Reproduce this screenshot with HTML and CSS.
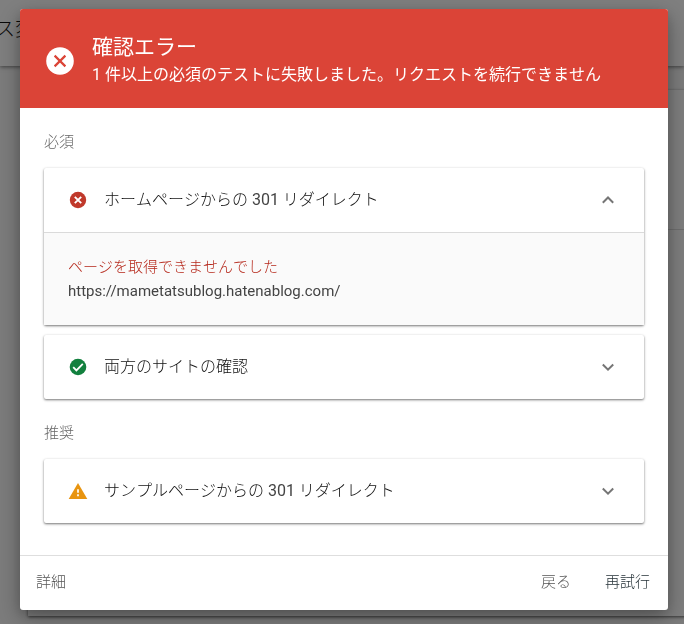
FILE: index.html
```html
<!DOCTYPE html>
<html lang="ja">
<head>
<meta charset="utf-8">
<meta name="viewport" content="width=device-width, initial-scale=1">
<title>確認エラー</title>
<link rel="stylesheet" href="styles.css">
</head>
<body>
<div class="page">
  <header class="appbar">ス変</header>
  <div class="sheet"><div class="sheet-top"></div></div>
</div>
<div class="scrim">
  <section class="dialog" role="dialog" aria-modal="true" aria-labelledby="dialog-title">
    <header class="dialog-header">
      <svg class="icon-lg" viewBox="0 0 28 28" aria-hidden="true"><circle cx="14" cy="14" r="13.8" fill="#fff"/><path d="M8.6 8.6l10.8 10.8M19.4 8.6L8.6 19.4" stroke="#db4437" stroke-width="2.2"/></svg>
      <div>
        <h1 class="title" id="dialog-title">確認エラー</h1>
        <p class="subtitle">1 件以上の必須のテストに失敗しました。リクエストを続行できません</p>
      </div>
    </header>
    <div class="content">
      <h2 class="label">必須</h2>
      <div class="cards">
        <div class="card">
          <button class="row" type="button" aria-expanded="true">
            <svg class="icon" viewBox="0 0 20 20" aria-hidden="true"><circle cx="10" cy="10" r="8.2" fill="#c0392b"/><path d="M6.8 6.8l6.4 6.4M13.2 6.8l-6.4 6.4" stroke="#fff" stroke-width="1.9"/></svg>
            <span class="name">ホームページからの <span class="code">301</span> リダイレクト</span>
            <svg class="chevron" viewBox="0 0 24 24" aria-hidden="true"><path d="M6.8 14.7L12 9.5l5.2 5.2"/></svg>
          </button>
          <div class="detail">
            <p class="error">ページを取得できませんでした</p>
            <p class="url">https://mametatsublog.hatenablog.com/</p>
          </div>
        </div>
        <div class="card">
          <button class="row" type="button" aria-expanded="false">
            <svg class="icon" viewBox="0 0 20 20" aria-hidden="true"><circle cx="10" cy="10" r="8.3" fill="#12803e"/><path d="M5.2 10.2l3.2 3.2 6.4-6.5" fill="none" stroke="#fff" stroke-width="1.8"/></svg>
            <span class="name">両方のサイトの確認</span>
            <svg class="chevron" viewBox="0 0 24 24" aria-hidden="true"><path d="M6.8 9.5l5.2 5.2 5.2-5.2"/></svg>
          </button>
        </div>
      </div>
      <h2 class="label">推奨</h2>
      <div class="cards">
        <div class="card">
          <button class="row" type="button" aria-expanded="false">
            <svg class="icon" viewBox="0 0 20 20" aria-hidden="true"><path d="M10 2L19.3 18H.7z" fill="#e8940f"/><path d="M10 8.2v3.6M10 13.3v2" stroke="#fff" stroke-width="1.7"/></svg>
            <span class="name">サンプルページからの <span class="code">301</span> リダイレクト</span>
            <svg class="chevron" viewBox="0 0 24 24" aria-hidden="true"><path d="M6.8 9.5l5.2 5.2 5.2-5.2"/></svg>
          </button>
        </div>
      </div>
    </div>
    <footer class="actions">
      <button class="action" type="button">詳細</button>
      <button class="action action-back" type="button">戻る</button>
      <button class="action action-retry" type="button">再試行</button>
    </footer>
  </section>
</div>
</body>
</html>
```
FILE: styles.css
```css
* {
  box-sizing: border-box;
}

body {
  margin: 0;
  overflow: hidden;
  background: #f8f8f8;
  color: #111;
  font-family: Roboto, "Noto Sans CJK JP", sans-serif;
  font-weight: 300;
  font-kerning: none;
}

h1,
h2,
p {
  margin: 0;
  font-weight: inherit;
}

.page {
  display: flex;
  flex-direction: column;
  gap: 24px;
  height: 100vh;
}

.appbar {
  flex: none;
  height: 66px;
  padding: 14px 0;
  background: #fff;
  box-shadow: 0 1px 4px rgba(0, 0, 0, 0.5);
  font-size: 20px;
  line-height: 30px;
  text-indent: -5px;
}

.sheet {
  flex: 1;
  margin: 0 -8px 8px 28px;
  background: #fdfdfd;
  box-shadow: 0 1px 3px rgba(0, 0, 0, 0.6);
}

.sheet-top {
  height: 140px;
  border-bottom: 1px solid #dcdcdc;
}

.scrim {
  position: fixed;
  inset: 0;
  padding: 9px 16px 14px 20px;
  background: rgba(0, 0, 0, 0.5);
}

.dialog {
  overflow: hidden;
  border-radius: 3px;
  background: #fff;
  box-shadow: 0 8px 24px rgba(0, 0, 0, 0.3), 0 4px 12px rgba(0, 0, 0, 0.15);
}

.dialog-header {
  display: flex;
  align-items: center;
  gap: 18px;
  padding: 24px 26px 19px;
  background: #db4437;
  color: #fff;
  font-weight: 400;
}

.icon-lg {
  flex: none;
  width: 28px;
  height: 28px;
}

.title {
  font-size: 21px;
  line-height: 28px;
}

.subtitle {
  font-size: 16px;
  line-height: 28px;
}

.content {
  padding: 24px 24px 32px;
}

.label {
  margin-bottom: 16px;
  color: #666;
  font-size: 15px;
  line-height: 20px;
}

.cards {
  display: flex;
  flex-direction: column;
  gap: 10px;
}

.cards + .label {
  margin-top: 24px;
}

.card {
  border-radius: 2px;
  background: #fff;
  box-shadow: 0 1px 3px rgba(0, 0, 0, 0.3), 0 1px 2px rgba(0, 0, 0, 0.3);
}

button {
  border: 0;
  background: none;
  color: inherit;
  font: inherit;
  font-kerning: inherit;
}

.row {
  display: flex;
  align-items: center;
  gap: 16px;
  width: 100%;
  height: 64px;
  padding: 0 24px;
  font-size: 16px;
  line-height: 24px;
  text-align: left;
}

.icon {
  flex: none;
  width: 20px;
  height: 20px;
}

.name {
  flex: 1;
}

.code {
  color: #444;
  font-weight: 400;
}

.chevron {
  flex: none;
  width: 24px;
  height: 24px;
  fill: none;
  stroke: #757575;
  stroke-width: 2;
}

.detail {
  padding: 22px 24px;
  border-top: 1px solid #dadada;
  background: #fafafa;
  font-size: 15px;
  line-height: 24px;
}

.error {
  color: #b5271a;
}

.url {
  color: #444;
  font-weight: 400;
  font-kerning: normal;
}

.actions {
  display: flex;
  gap: 34px;
  padding: 15px 18px 17px 16px;
  border-top: 1px solid #dedede;
  color: #555;
  font-size: 15px;
  line-height: 22px;
}

.action {
  padding: 0;
}

.action-back {
  margin-left: auto;
}

.action-retry {
  color: #263238;
}
```
